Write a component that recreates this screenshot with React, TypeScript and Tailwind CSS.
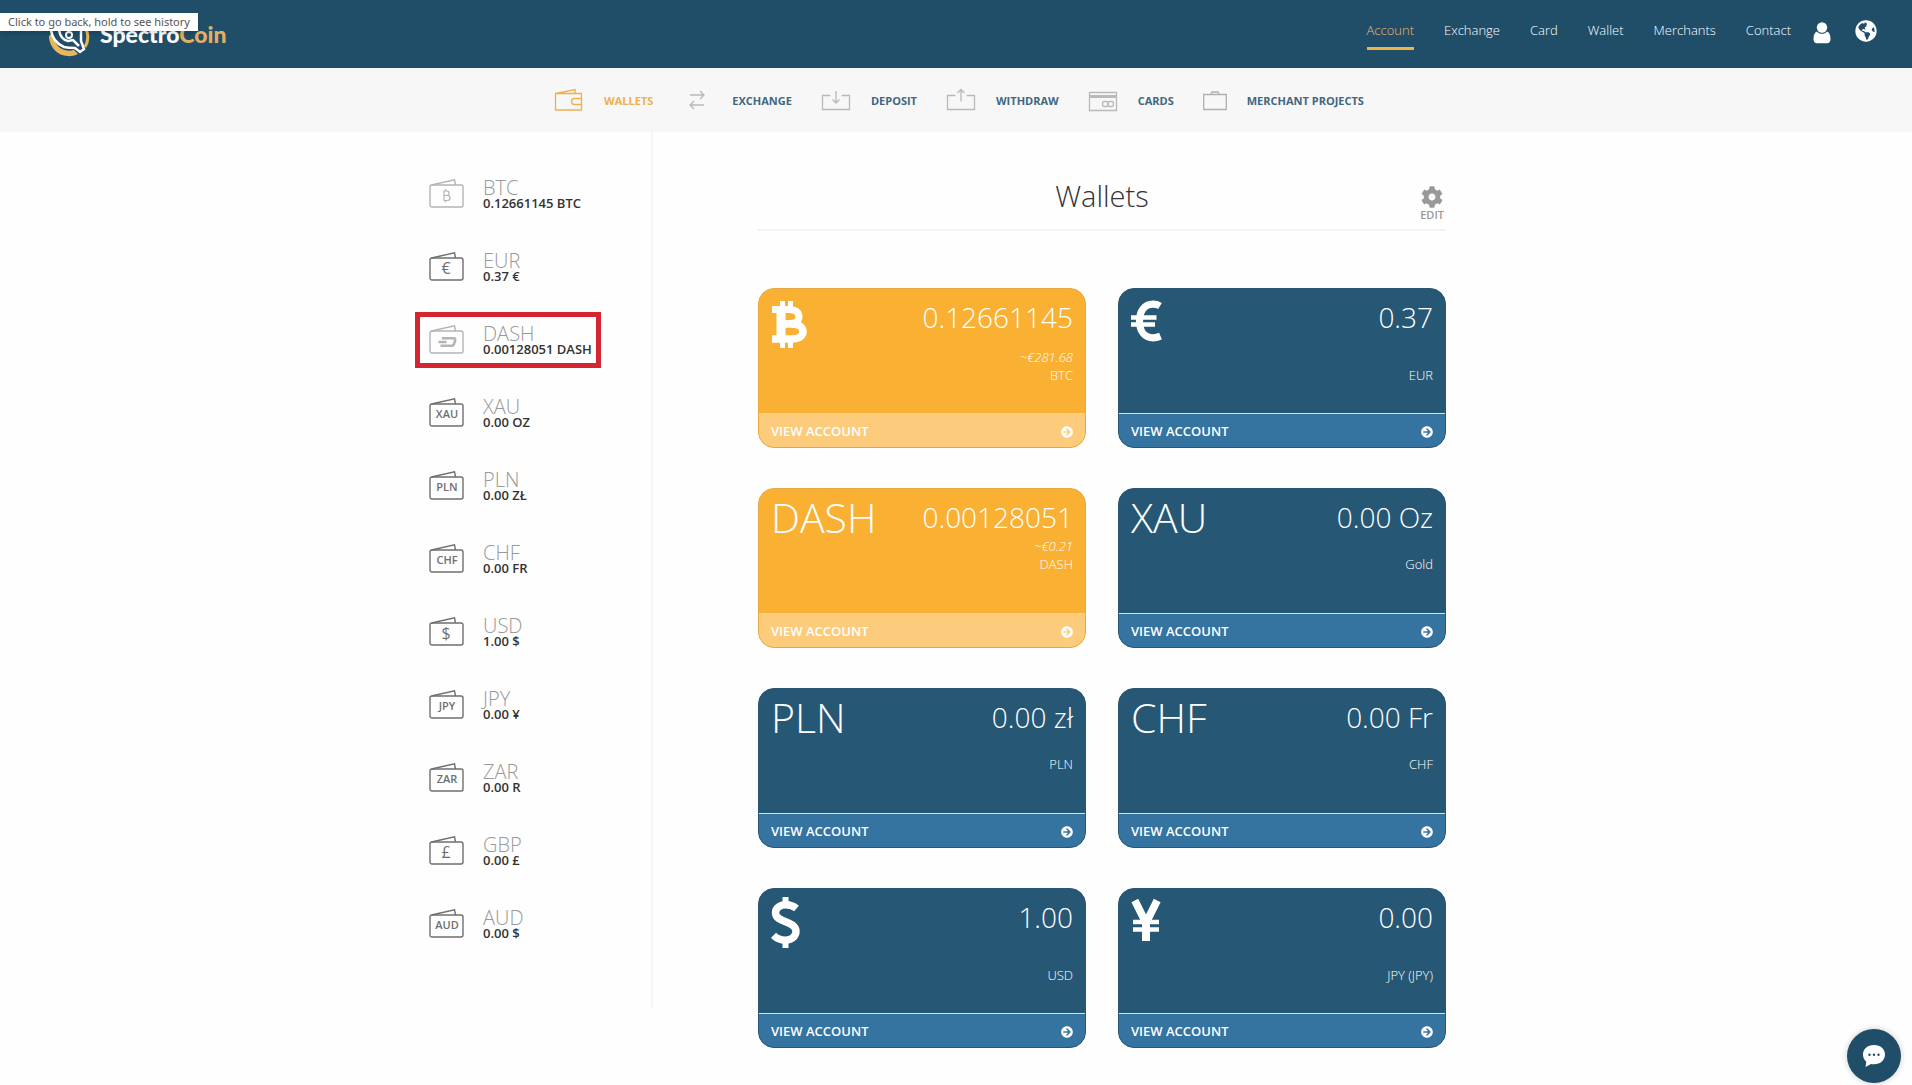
import type { ReactNode } from "react";
import { FaArrowCircleRight, FaCog, FaGlobeAmericas } from "react-icons/fa";

type Wallet = {
  code: string;
  balance: string;
  glyph?: string;
  pale?: boolean;
  active?: boolean;
};

type Account = {
  title: string;
  icon?: ReactNode;
  amount: string;
  estimate?: string;
  label: string;
  crypto?: boolean;
};

const topLinks = ["Account", "Exchange", "Card", "Wallet", "Merchants", "Contact"];

const wallets: Wallet[] = [
  { code: "BTC", balance: "0.12661145 BTC", pale: true },
  { code: "EUR", balance: "0.37 €", glyph: "€" },
  { code: "DASH", balance: "0.00128051 DASH", pale: true, active: true },
  { code: "XAU", balance: "0.00 OZ", glyph: "XAU" },
  { code: "PLN", balance: "0.00 ZŁ", glyph: "PLN" },
  { code: "CHF", balance: "0.00 FR", glyph: "CHF" },
  { code: "USD", balance: "1.00 $", glyph: "$" },
  { code: "JPY", balance: "0.00 ¥", glyph: "JPY" },
  { code: "ZAR", balance: "0.00 R", glyph: "ZAR" },
  { code: "GBP", balance: "0.00 £", glyph: "£" },
  { code: "AUD", balance: "0.00 $", glyph: "AUD" },
];

const accounts: Account[] = [
  { title: "Bitcoin", icon: <BitcoinSign />, amount: "0.12661145", estimate: "~€281.68", label: "BTC", crypto: true },
  { title: "Euro", icon: <EuroSign />, amount: "0.37", label: "EUR" },
  { title: "DASH", amount: "0.00128051", estimate: "~€0.21", label: "DASH", crypto: true },
  { title: "XAU", amount: "0.00 Oz", label: "Gold" },
  { title: "PLN", amount: "0.00 zł", label: "PLN" },
  { title: "CHF", amount: "0.00 Fr", label: "CHF" },
  { title: "Dollar", icon: <DollarSign />, amount: "1.00", label: "USD" },
  { title: "Yen", icon: <YenSign />, amount: "0.00", label: "JPY (JPY)" },
];

function BitcoinSign() {
  return (
    <svg viewBox="0 0 40 52" className="h-[52px] w-10" fill="none" stroke="currentColor" aria-hidden="true">
      <path d="M11.500 5v8M19.500 5v8M11.500 44v8M19.500 44v8" strokeWidth="5" />
      <path d="M1 13.500h16.500c7 0 10.500 2.700 10.500 7s-3.500 7-9 7H9" strokeWidth="7" />
      <path d="M9 28h11c8 0 12 3 12 7.500S28 43 20.500 43H1" strokeWidth="7.500" />
      <path d="M10 12v32" strokeWidth="9" />
    </svg>
  );
}

function EuroSign() {
  return (
    <svg viewBox="0 0 40 52" className="h-[52px] w-10" fill="none" stroke="currentColor" aria-hidden="true">
      <path d="M29 10C27 8.800 24.500 8.200 22 8.200 13.500 8.200 8.500 15 8.500 25S13.500 41.800 22 41.800c2.800 0 5-.6 7.500-1.600" strokeWidth="7.200" />
      <path d="M0 21.500h25.500M0 28.500h24" strokeWidth="4.600" />
    </svg>
  );
}

function DollarSign() {
  return (
    <svg viewBox="0 0 40 52" className="h-[52px] w-10" fill="none" stroke="currentColor" aria-hidden="true">
      <path d="M25.500 12.500C22.500 10 19 8.800 15 8.800 9 8.800 4.500 12 4.500 16.800c0 10.500 20.500 7.500 20.500 18.500 0 5.200-4.500 8.800-10.800 8.800-4.500 0-8.700-1.800-11.700-4.800" strokeWidth="7.400" />
      <path d="M14.500 1v8M14.500 43v9" strokeWidth="6" />
    </svg>
  );
}

function YenSign() {
  return (
    <svg viewBox="0 0 40 52" className="h-[52px] w-10" fill="none" stroke="currentColor" aria-hidden="true">
      <path d="M3.800 4.500 15 27 26.200 4.500" strokeWidth="7.600" />
      <path d="M15 24v21" strokeWidth="8" />
      <path d="M2 26h26M2 33.500h26" strokeWidth="4.600" />
    </svg>
  );
}

function LogoMark() {
  return (
    <svg viewBox="0 0 42 42" className="size-[42px]" fill="none" aria-hidden="true">
      <path d="M1 21a20 20 0 0 0 29 18l-4-4C14 38 5 30 5 17Z" fill="#e9b65a" />
      <path d="M38 14c3 7 2 13-1 18" stroke="#e9b65a" strokeWidth="3" />
      <path d="M3 15c1 8 6 14 13 17 4 1 8 1 11 1l5 4 4-3-3-8V13" stroke="#fff" strokeWidth="2.500" />
      <path d="M11 15c1 6 4 10 9 11l5-1 6 6" stroke="#fff" strokeWidth="2.500" />
      <circle cx="21" cy="20" r="3" stroke="#fff" strokeWidth="2" />
    </svg>
  );
}

function UserIcon() {
  return (
    <svg viewBox="0 0 18 22" className="h-[22px] w-[18px]" fill="currentColor" aria-hidden="true">
      <circle cx="9" cy="5.500" r="5.200" />
      <path d="M4 9.500C1.500 10.500.5 13.500.5 17c0 2.800 1.300 4.300 3.500 4.300h10c2.200 0 3.500-1.500 3.500-4.300 0-3.500-1-6.500-3.500-7.500-1.200 1.400-3 2.300-5 2.300s-3.800-.9-5-2.300Z" />
    </svg>
  );
}

function WalletGlyph({ wallet }: { wallet: Wallet }) {
  const { code, glyph, pale } = wallet;
  return (
    <svg viewBox="0 0 36 30" className={pale ? "h-[30px] w-9 text-[#b4b4b4]" : "h-[30px] w-9 text-[#6f6f6f]"} fill="none" stroke="currentColor" aria-hidden="true">
      <rect x="1" y="6" width="33" height="22" rx="2" strokeWidth="1.400" />
      <path d="M2.500 6 25.500 .8 26.500 6" strokeWidth="1.400" />
      {code === "BTC" && (
        <path d="M14.500 12h3c3.500 0 3.500 4.500 0 4.500h-2.500 3c4 0 4 5 0 5h-3.500M15 12v9.500M16.500 10v2M16.500 21.500v2" strokeWidth="1.200" />
      )}
      {code === "DASH" && (
        <path d="M13 13.200h11.500c1.500 0 2 .8 1.600 2.200l-1 3.200c-.4 1.500-1.200 2.200-2.700 2.200H11.500M9.500 17h8" strokeWidth="2.600" />
      )}
      {glyph && (
        <text
          x={glyph.length > 1 ? 18 : 17}
          y={glyph.length > 1 ? 20 : 22}
          textAnchor="middle"
          fill="currentColor"
          stroke="none"
          className={glyph.length > 1 ? "text-[11px] font-semibold" : "text-base"}
        >
          {glyph}
        </text>
      )}
    </svg>
  );
}

const sections: { label: string; icon: ReactNode; active?: boolean; narrow?: boolean }[] = [
  {
    label: "WALLETS",
    active: true,
    icon: (
      <>
        <path d="M1.500 6.500h26V23h-26zM2 6.500 21 2.500v4" />
        <path d="M27.500 11.500h-7a3 3 0 0 0 0 6h7" />
      </>
    ),
  },
  { label: "EXCHANGE", icon: <path d="M8 8h14M18 4l4 4-4 4M22 18H8M12 14l-4 4 4 4" /> },
  { label: "DEPOSIT", icon: <path d="M9.500 8.500h-8v14h27v-14h-8M15 4v12M11.500 12.500l3.500 3.500 3.500-3.500" /> },
  { label: "WITHDRAW", icon: <path d="M9.500 8.500h-8v14h27v-14h-8M15 14.500V2.500M11.500 6 15 2.500 18.500 6" /> },
  {
    label: "CARDS",
    icon: (
      <>
        <path d="M1.500 5.500h27v18h-27z" />
        <path d="M1.500 9.500h27" strokeWidth="3" />
        <rect x="14.500" y="14.500" width="5.500" height="5" rx="2" />
        <rect x="20" y="14.500" width="5.500" height="5" rx="2" />
      </>
    ),
  },
  { label: "MERCHANT PROJECTS", narrow: true, icon: <path d="M.7 7.500h22.600v15H.7zM8 7.500 9 5h6l1 2.500" /> },
];

function AccountCard({ account }: { account: Account }) {
  const { title, icon, amount, estimate, label, crypto } = account;
  return (
    <article
      className={
        crypto
          ? "flex h-40 flex-col overflow-hidden rounded-2xl border border-[#e6a844] bg-[#f9b033] text-white"
          : "flex h-40 flex-col overflow-hidden rounded-2xl border border-[#2a5570] bg-[#265775] text-white"
      }
    >
      <div className="flex-1 px-3 pt-[7px] text-right font-light">
        <div className={icon ? "flex h-[52px] justify-between" : "flex h-[41px] justify-between"}>
          {icon ?? <h2 className="text-[41px] leading-[42px]">{title}</h2>}
          <p className="text-[28px] leading-[42px]">{amount}</p>
        </div>
        <p className="h-[18px] text-[13px] leading-[18px] italic">{estimate}</p>
        <p className="text-[13px] leading-[18px]">{label}</p>
      </div>
      <a
        href="#account"
        aria-label={`View account ${title}`}
        className={
          crypto
            ? "flex h-[34px] items-center justify-between border-t border-[#fbd08c] bg-[#fccb7c] px-3 pt-0.5 text-[13px] font-semibold"
            : "flex h-[34px] items-center justify-between border-t border-[#d5e3ec] bg-[#3573a0] px-3 pt-0.5 text-[13px] font-semibold"
        }
      >
        VIEW ACCOUNT
        <FaArrowCircleRight className="size-3" />
      </a>
    </article>
  );
}

export default function App() {
  return (
    <div className="min-h-screen bg-[#fefefe] font-['Open_Sans','Noto_Sans',sans-serif] text-[#333]">
      <header className="relative flex h-[68px] items-start justify-between bg-[#204d68] pr-[35px] pl-12 text-white">
        <a href="#home" className="flex items-start gap-2.5 pt-[15px]">
          <LogoMark />
          <span className="pt-[5px] font-['Lato',sans-serif] text-[23px] leading-7 font-black">
            Spectro<span className="text-[#e3b062]">Coin</span>
          </span>
        </a>
        <nav className="flex gap-[22px] pt-5 text-[13px] leading-5">
          <div className="flex gap-[30px] font-light">
            {topLinks.map((link, i) => (
              <a
                key={link}
                href={`#${link.toLowerCase()}`}
                className={i === 0 ? "h-[30px] border-b-[3px] border-[#f0b445] text-[#f0b868]" : "h-[30px]"}
              >
                {link}
              </a>
            ))}
          </div>
          <div className="flex gap-6">
            <button type="button" aria-label="Profile" className="h-[26px]">
              <UserIcon />
            </button>
            <button type="button" aria-label="Language" className="h-[22px]">
              <FaGlobeAmericas className="size-[22px]" />
            </button>
          </div>
        </nav>
        <div role="tooltip" className="absolute top-[13px] left-0 bg-white px-2 font-['Noto_Sans',sans-serif] text-[11px] leading-[18px] text-[#555] shadow-md">
          Click to go back, hold to see history
        </div>
      </header>

      <nav className="flex h-16 items-center justify-center gap-[29px] bg-[#f7f7f7] pt-0.5 pl-1.5 text-[11px] font-bold text-[#41677f]">
        {sections.map(({ label, icon, active, narrow }) => (
          <a key={label} href={`#${label.toLowerCase()}`} className={active ? "flex items-center gap-5 text-[#efb04b]" : "flex items-center gap-5"}>
            <svg
              viewBox={narrow ? "0 0 24 28" : "0 0 30 28"}
              className={active ? "h-7 w-[30px]" : narrow ? "h-7 w-6 text-[#b0b0b0]" : "h-7 w-[30px] text-[#b9b9b9]"}
              fill="none"
              stroke="currentColor"
              strokeWidth="1.300"
              aria-hidden="true"
            >
              {icon}
            </svg>
            {label}
          </a>
        ))}
      </nav>

      <div className="mx-auto flex max-w-[1168px] items-start">
        <aside className="w-[281px] shrink-0 border-r-2 border-[#f6f6f6] pt-[34px] pb-[39px] pl-[43px]">
          <ul>
            {wallets.map((wallet) => (
              <li key={wallet.code} className="h-[73px]">
                <a
                  href={`#wallet-${wallet.code}`}
                  className={
                    wallet.active
                      ? "flex h-14 w-[186px] items-center gap-[18px] border-5 border-[#d42530] pl-[9px]"
                      : "flex h-14 items-center gap-[18px] pl-3.5"
                  }
                >
                  <WalletGlyph wallet={wallet} />
                  <span className="flex flex-col pt-0.5 whitespace-nowrap">
                    <span className="text-xl leading-[16px] font-light text-[#999]">{wallet.code}</span>
                    <span className="text-[13px] leading-[14px] font-semibold text-[#333]">{wallet.balance}</span>
                  </span>
                </a>
              </li>
            ))}
          </ul>
        </aside>

        <main className="flex-1 pt-11 pr-[94px] pb-9 pl-[105px]">
          <div className="relative border-b-2 border-[#f3f3f3] pb-[13px]">
            <h1 className="text-center text-[29px] leading-10 font-light">Wallets</h1>
            <button type="button" className="absolute top-2.5 right-0.5 flex flex-col items-center text-[11px] leading-[14px] font-semibold text-[#999]">
              <FaCog className="size-[22px]" />
              EDIT
            </button>
          </div>
          <div className="grid grid-cols-2 gap-x-8 gap-y-10 pt-[57px]">
            {accounts.map((account) => (
              <AccountCard key={account.title} account={account} />
            ))}
          </div>
        </main>
      </div>

      <button
        type="button"
        aria-label="Open chat"
        className="fixed right-[11px] bottom-0.5 flex size-[54px] items-center justify-center rounded-full bg-[#204d68] shadow-[0_0_6px_rgba(0,0,0,0.2)]"
      >
        <svg viewBox="0 0 24 24" className="size-6" aria-hidden="true">
          <path d="M12 1C5.500 1 1 5 1 10.500c0 3 1.200 5.500 3.300 7.200L3.500 23l5.500-3c1 .2 2 .3 3 .3 6.500 0 11-4.300 11-9.800S18.500 1 12 1Z" fill="#fff" />
          <circle cx="7.500" cy="10.700" r="1.200" fill="#204d68" />
          <circle cx="12" cy="10.700" r="1.200" fill="#204d68" />
          <circle cx="16.500" cy="10.700" r="1.200" fill="#204d68" />
        </svg>
      </button>
    </div>
  );
}
